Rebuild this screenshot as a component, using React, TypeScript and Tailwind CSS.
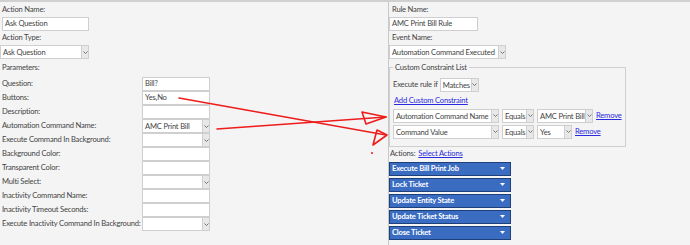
import { ReactNode } from "react";

const params: { label: string; value?: string; select?: boolean }[] = [
  { label: "Question:", value: "Bill?" },
  { label: "Buttons:", value: "Yes,No" },
  { label: "Description:" },
  { label: "Automation Command Name:", value: "AMC Print Bill", select: true },
  { label: "Execute Command In Background:", select: true },
  { label: "Background Color:" },
  { label: "Transparent Color:" },
  { label: "Multi Select:", select: true },
  { label: "Inactivity Command Name:" },
  { label: "Inactivity Timeout Seconds:" },
  { label: "Execute Inactivity Command In Background:", select: true },
];

const actions = ["Execute Bill Print Job", "Lock Ticket", "Update Entity State", "Update Ticket Status", "Close Ticket"];

function TextBox({ value, className = "" }: { value?: string; className?: string }) {
  return (
    <div className={`flex h-[14px] items-center border border-[#cfcfcf] bg-white px-[2px] whitespace-nowrap text-[#444] ${className}`}>
      {value}
    </div>
  );
}

function SelectBox({ value, className = "" }: { value?: string; className?: string }) {
  return (
    <div className={`flex h-[14px] items-center border border-[#cfcfcf] bg-white text-[#444] ${className}`}>
      <span className="min-w-0 flex-1 pl-[2px] leading-[12px] whitespace-nowrap">{value}</span>
      <span className="flex h-full w-[7px] shrink-0 items-center justify-center border-l border-[#cfcfcf] bg-[#e8e8e8]">
        <svg width="5" height="3" viewBox="0 0 5 3">
          <path d="M0.5 0.5 L2.5 2.5 L4.5 0.5" fill="none" stroke="#666" strokeWidth="0.9" />
        </svg>
      </span>
    </div>
  );
}

function Label({ children, className = "" }: { children: ReactNode; className?: string }) {
  return <div className={`flex h-[14px] items-center whitespace-nowrap text-[#444] ${className}`}>{children}</div>;
}

function LinkText({ children }: { children: ReactNode }) {
  return <span className="whitespace-nowrap text-[#2a2ae0] underline">{children}</span>;
}

export default function App() {
  return (
    <div
      className="relative flex h-[245px] w-[690px] overflow-hidden border-t-2 border-[#d0d0d0] bg-[#f4f4f4] text-[7.6px] leading-none tracking-[-0.2px]"
      style={{ fontFamily: 'Lato, "Open Sans", sans-serif' }}
    >
      <div className="w-[389px] shrink-0 border-r border-[#c8c8c8] pt-[1px] pl-[2px]">
        <Label>Action Name:</Label>
        <TextBox value="Ask Question" className="w-[87px]" />
        <Label>Action Type:</Label>
        <SelectBox value="Ask Question" className="-ml-[2px] w-[89px]" />
        <Label className="mt-[2px]">Parameters:</Label>
        <div className="mt-[2px] grid grid-cols-[140px_68px]">
          {params.map((p) => (
            <div key={p.label} className="contents">
              <Label>{p.label}</Label>
              {p.select ? <SelectBox value={p.value} /> : <TextBox value={p.value} />}
            </div>
          ))}
        </div>
      </div>

      <div className="flex-1 pt-[1px]">
        <Label className="pl-[3px]">Rule Name:</Label>
        <TextBox value="AMC Print Bill Rule" className="w-[89px]" />
        <Label className="pl-[3px]">Event Name:</Label>
        <SelectBox value="Automation Command Executed" className="w-[117px]" />
        <fieldset className="mt-[5px] w-[233px] border border-[#cfcfcf] px-[3px] pb-[7px]">
          <legend className="px-[2px] text-[#444]">Custom Constraint List</legend>
          <div className="mt-[6px] flex items-center gap-[2px]">
            <span className="text-[#444]">Execute rule if</span>
            <SelectBox value="Matches" className="w-[39px]" />
          </div>
          <div className="mt-[2px] flex h-[14px] items-center pl-[1px]">
            <LinkText>Add Custom Constraint</LinkText>
          </div>
          <div className="mt-[1px] flex flex-col gap-[2px]">
            <div className="flex items-center gap-[3px]">
              <SelectBox value="Automation Command Name" className="w-[106px]" />
              <SelectBox value="Equals" className="w-[32px]" />
              <SelectBox value="AMC Print Bill" className="w-[56px]" />
              <LinkText>Remove</LinkText>
            </div>
            <div className="flex items-center gap-[3px]">
              <SelectBox value="Command Value" className="w-[106px]" />
              <SelectBox value="Equals" className="w-[32px]" />
              <SelectBox value="Yes" className="w-[35px]" />
              <LinkText>Remove</LinkText>
            </div>
          </div>
        </fieldset>
        <div className="flex h-[14px] items-center gap-[3px] pl-[1px]">
          <span className="text-[#444]">Actions:</span>
          <LinkText>Select Actions</LinkText>
        </div>
        <div className="mt-[1px] flex w-[122px] flex-col gap-[2px]">
          {actions.map((a) => (
            <div
              key={a}
              className="flex h-[14px] items-center justify-between border border-[#1d3f7a] bg-[#3a6cc2] pr-[5px] pl-[2px] font-bold whitespace-nowrap text-white"
            >
              <span>{a}</span>
              <svg width="5" height="3" viewBox="0 0 5 3">
                <path d="M0 0 L5 0 L2.5 3 Z" fill="#fff" />
              </svg>
            </div>
          ))}
        </div>
      </div>

      <svg className="pointer-events-none absolute inset-0" width="690" height="245" viewBox="0 0 690 245">
        <g fill="none" stroke="#ee1c1c" strokeWidth="1.6" strokeLinecap="round" strokeLinejoin="round">
          <path d="M179 96 L386 133" />
          <path d="M217 127 L386 115" />
          <path d="M386 115 L362 110 L366 122 Z" />
          <path d="M387 133 L377 128 L373 143 Z" />
        </g>
        <circle cx="372" cy="151" r="1" fill="#ee1c1c" />
      </svg>
    </div>
  );
}
